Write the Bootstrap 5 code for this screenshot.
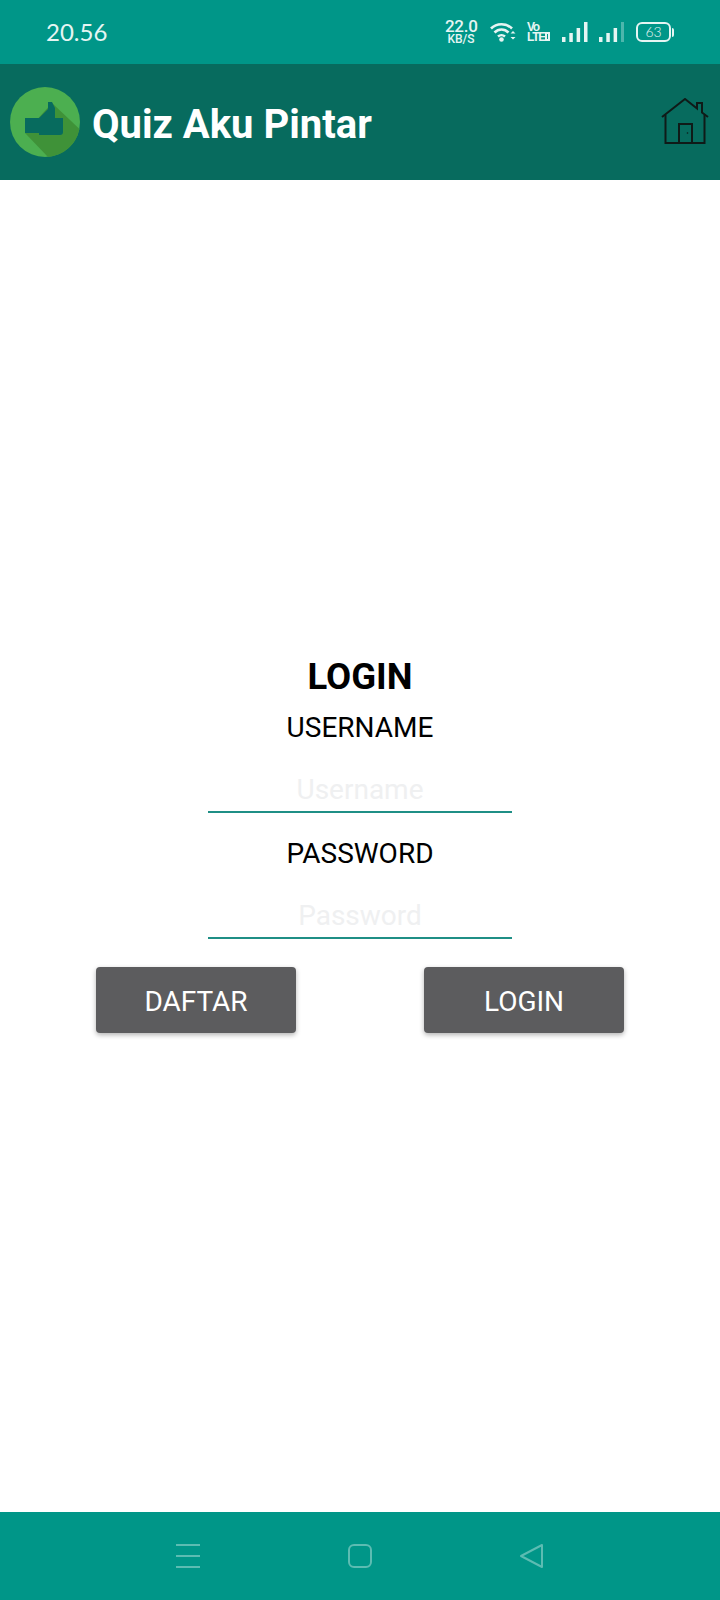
<!DOCTYPE html>
<html lang="en">
<head>
    <meta charset="UTF-8">
    <title>Quiz Aku Pintar</title>
    <meta name="viewport" content="width=device-width, initial-scale=1">
    <link href="https://cdn.jsdelivr.net/npm/bootstrap@5.3.3/dist/css/bootstrap.min.css" rel="stylesheet">
    <style>
        body {
            width: 720px;
            height: 1600px;
            background: #fff;
            font-family: Roboto, "Liberation Sans", sans-serif;
        }
        .status-bar {
            height: 64px;
            background: #009688;
            color: #e6f5f3;
            padding: 0 46px;
        }
        .status-time {
            font-family: Lato, Roboto, sans-serif;
            font-size: 24px;
            line-height: 1;
        }
        .net-speed {
            width: 32px;
            font-size: 17px;
            font-weight: 500;
            line-height: 13px;
            letter-spacing: -.3px;
            text-align: center;
            margin-right: 13px;
        }
        .net-speed span {
            display: block;
            font-size: 12px;
            line-height: 10px;
            letter-spacing: 0;
            margin-top: 1px;
        }
        .volte {
            width: 23px;
            font-family: "Liberation Sans", Roboto, sans-serif;
            font-size: 12px;
            font-weight: 700;
            line-height: 10px;
            letter-spacing: -1.300px;
            white-space: nowrap;
            margin: 0 12px 0 11px;
        }
        .volte i {
            display: inline-block;
            width: 5px;
            height: 9px;
            border: 2px solid #e6f5f3;
        }
        .battery-level {
            width: 35px;
            height: 20px;
            border: 2px solid #e6f5f3;
            border-radius: 6px;
            font-family: Lato, Roboto, sans-serif;
            font-size: 14px;
            font-weight: 300;
            line-height: 16px;
            text-align: center;
            margin-left: 11px;
        }
        .battery-tip {
            width: 2px;
            height: 9px;
            background: #e6f5f3;
            border-radius: 0 2px 2px 0;
            margin-left: 1px;
        }
        .signal-gap {
            margin-left: 11px;
        }
        .app-bar {
            height: 116px;
            background: #076b5e;
            padding: 0 11px 0 10px;
        }
        .app-title {
            font-size: 40px;
            font-weight: 700;
            margin: 6px 0 0 12px;
            color: #fff;
            line-height: 1;
        }
        .login-area {
            height: 1332px;
        }
        .login-form {
            padding-bottom: 8px;
        }
        .login-title {
            font-size: 36.500px;
            font-weight: 700;
            line-height: 52px;
            color: #000;
            margin: 0;
        }
        .field-label {
            display: block;
            font-size: 28px;
            line-height: 50px;
            color: #000;
            margin: 0;
        }
        .field-label.second {
            margin-top: 16px;
        }
        .field-input {
            display: block;
            width: 304px;
            height: 60px;
            margin: 0 auto;
            padding: 15px 0 0;
            border: 0;
            border-bottom: 2px solid #1f8f86;
            border-radius: 0;
            font-size: 28px;
            text-align: center;
            background: transparent;
        }
        .field-input:focus {
            box-shadow: none;
            border-bottom-color: #1f8f86;
        }
        .field-input::placeholder {
            color: #eff0f1;
            opacity: 1;
        }
        .form-actions {
            margin-top: 28px;
            gap: 128px;
        }
        .action-btn {
            width: 200px;
            height: 66px;
            padding: 3px 0 0;
            border: 0;
            border-radius: 4px;
            background: #5c5c5e;
            color: #fff;
            font-size: 28px;
            box-shadow: 0 2px 5px rgba(0, 0, 0, .3);
        }
        .nav-bar {
            height: 88px;
            background: #009688;
            gap: 146px;
        }
    </style>
</head>
<body class="d-flex flex-column">
    <div class="status-bar d-flex align-items-center justify-content-between">
        <div class="status-time">20.56</div>
        <div class="d-flex align-items-center">
            <div class="net-speed">22.0<span>KB/S</span></div>
            <svg width="26" height="20" viewBox="0 0 26 20" fill="none" stroke="#e6f5f3" stroke-width="2.600">
                <path d="M1 6.500C6.500 .8 16.500 .8 22 6.500"/>
                <path d="M4.500 10.500C8.500 6.500 14.500 6.500 18.500 10.500"/>
                <path d="M8 14.500C10 12.800 13 12.800 15 14.500"/>
                <circle cx="11.500" cy="17.500" r="2.300" fill="#e6f5f3" stroke="none"/>
                <path d="M20.500 11.500l2.500-2.500 2.500 2.500zM20.500 15l2.500 2.500 2.500-2.500z" fill="#e6f5f3" stroke="none"/>
            </svg>
            <div class="volte">Vo<br>LTE<i></i></div>
            <svg width="26" height="20" viewBox="0 0 26 20" fill="#e6f5f3">
                <rect x="0" y="15" width="3.500" height="5"/>
                <rect x="7.300" y="11" width="3.500" height="9"/>
                <rect x="14.600" y="6" width="3.500" height="14"/>
                <rect x="22" y="0" width="3.500" height="20"/>
            </svg>
            <svg class="signal-gap" width="26" height="20" viewBox="0 0 26 20" fill="#e6f5f3">
                <rect x="0" y="15" width="3.500" height="5"/>
                <rect x="7.300" y="11" width="3.500" height="9"/>
                <rect x="14.600" y="6" width="3.500" height="14"/>
                <rect x="22" y="0" width="3" height="20" fill="#4db6ac"/>
            </svg>
            <div class="battery-level">63</div>
            <div class="battery-tip"></div>
        </div>
    </div>

    <div class="app-bar d-flex align-items-center">
        <svg width="70" height="70" viewBox="0 0 70 70">
            <circle cx="35" cy="35" r="35" fill="#4caf50"/>
            <path d="M15 46L42 16 69.500 42A35 35 0 0 1 38 70Z" fill="#3f9238"/>
            <path d="M15 31h14v15H15z" fill="#076b5e"/>
            <path d="M29 31L38 22V15h4l3 6v10h8v14c0 2-1 3-3 3H29z" fill="#076b5e"/>
        </svg>
        <h1 class="app-title flex-grow-1">Quiz Aku Pintar</h1>
        <svg width="48" height="48" viewBox="0 0 48 48" fill="none" stroke="#0f1a18" stroke-width="2">
            <path d="M1 19L24 1 36 10.500V5h5v9.500L47 19"/>
            <path d="M4.500 17V45h39V17"/>
            <path d="M18 45V26h13v19"/>
            <circle cx="26.500" cy="35" r=".8" fill="#0f1a18" stroke="none"/>
        </svg>
    </div>

    <main class="login-area d-flex flex-column justify-content-center">
        <form class="login-form text-center">
            <h2 class="login-title">LOGIN</h2>
            <label class="field-label" for="username">USERNAME</label>
            <input id="username" class="form-control field-input" type="text" placeholder="Username">
            <label class="field-label second" for="password">PASSWORD</label>
            <input id="password" class="form-control field-input" type="password" placeholder="Password">
            <div class="form-actions d-flex justify-content-center">
                <button type="button" class="btn action-btn">DAFTAR</button>
                <button type="button" class="btn action-btn">LOGIN</button>
            </div>
        </form>
    </main>

    <div class="nav-bar d-flex align-items-center justify-content-center">
        <svg width="26" height="26" viewBox="0 0 26 26" stroke="#5cbcb2" stroke-width="2" fill="none">
            <path d="M1 2h24M1 13h24M1 24h24"/>
        </svg>
        <svg width="26" height="26" viewBox="0 0 26 26" stroke="#5cbcb2" stroke-width="2" fill="none">
            <rect x="2" y="2" width="22" height="22" rx="5"/>
        </svg>
        <svg width="26" height="26" viewBox="0 0 26 26" stroke="#5cbcb2" stroke-width="2" fill="none" stroke-linejoin="round">
            <path d="M2 13L23 2v22z"/>
        </svg>
    </div>
    <script src="https://cdn.jsdelivr.net/npm/bootstrap@5.3.3/dist/js/bootstrap.bundle.min.js"></script>
</body>
</html>
